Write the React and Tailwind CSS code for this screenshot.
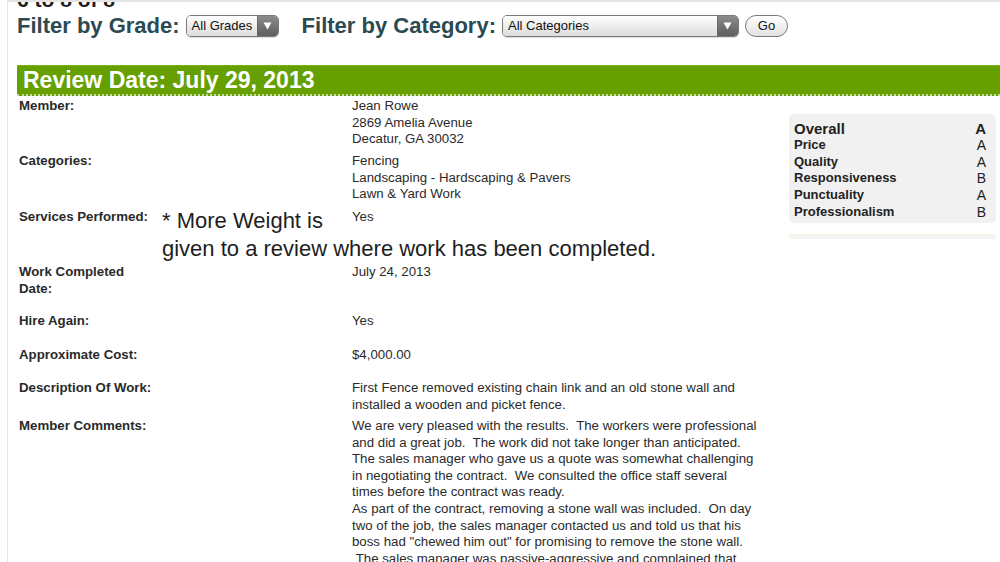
import React from 'react'

const ROWS = [
  { label: ['Member:'], value: ['Jean Rowe', '2869 Amelia Avenue', 'Decatur, GA 30032'], h: 'h-[55px]' },
  { label: ['Categories:'], value: ['Fencing', 'Landscaping - Hardscaping & Pavers', 'Lawn & Yard Work'], h: 'h-[56px]' },
  { label: ['Services Performed:'], value: ['Yes'], h: 'h-[55px]' },
  { label: ['Work Completed', 'Date:'], value: ['July 24, 2013'], h: 'h-[49px]' },
  { label: ['Hire Again:'], value: ['Yes'], h: 'h-[34px]' },
  { label: ['Approximate Cost:'], value: ['$4,000.00'], h: 'h-[33px]' },
  { label: ['Description Of Work:'], value: ['First Fence removed existing chain link and an old stone wall and', 'installed a wooden and picket fence.'], h: 'h-[38px]' },
  {
    label: ['Member Comments:'],
    value: [
      'We are very pleased with the results.  The workers were professional',
      'and did a great job.  The work did not take longer than anticipated.',
      'The sales manager who gave us a quote was somewhat challenging',
      'in negotiating the contract.  We consulted the office staff several',
      'times before the contract was ready.',
      'As part of the contract, removing a stone wall was included.  On day',
      'two of the job, the sales manager contacted us and told us that his',
      'boss had "chewed him out" for promising to remove the stone wall.',
      '\u00a0The sales manager was passive-aggressive and complained that',
    ],
    h: '',
  },
]

const RATINGS = [
  ['Price', 'A'],
  ['Quality', 'A'],
  ['Responsiveness', 'B'],
  ['Punctuality', 'A'],
  ['Professionalism', 'B'],
]

function FakeSelect({ text, width }) {
  return (
    <div className={`${width} h-[22px] flex items-stretch rounded-[5px] border border-[#7a7a7a] overflow-hidden shadow-[0_1px_1px_rgba(0,0,0,0.15)]`}>
      <div className="flex-1 flex items-center pl-[5px] text-[13px] text-[#111] bg-gradient-to-b from-white to-[#dcdcdc]">{text}</div>
      <div className="w-[21px] flex items-center justify-center bg-gradient-to-b from-[#8c8c8c] to-[#5e5e5e] border-l border-[#6a6a6a]">
        <svg width="9" height="8" viewBox="0 0 9 8"><path d="M0.5 0.5h8L4.5 7.5z" fill="#fff" /></svg>
      </div>
    </div>
  )
}

export default function App() {
  return (
    <div className="relative w-[1000px] h-[562px] overflow-hidden bg-white font-['Liberation_Sans',Arial,sans-serif]">
      <div className="absolute left-[7px] top-0 bottom-0 w-px bg-[#e6e6e6]" />
      <div className="absolute left-[8px] right-0 top-0 h-[2px] bg-[#e4e4e4]" />

      <div className="pl-[17px]">
        <div className="-mt-[10px] h-[20px] text-[21px] font-bold leading-[20px] text-[#1e1e1e]">6 to 8 of 8</div>

        <div className="flex items-center h-[26px] mt-[2px] text-[#2b4a51]">
          <span className="text-[22px] font-bold">Filter by Grade:</span>
          <div className="ml-[6px] mt-[2px]"><FakeSelect text="All Grades" width="w-[93px]" /></div>
          <span className="ml-[23px] text-[22px] font-bold">Filter by Category:</span>
          <div className="ml-[6px] mt-[2px]"><FakeSelect text="All Categories" width="w-[237px]" /></div>
          <button className="ml-[6px] mt-[2px] w-[43px] h-[22px] rounded-full border border-[#7a7a7a] bg-gradient-to-b from-white to-[#e2e2e2] text-[13px] text-[#111]">Go</button>
        </div>

        <div className="mt-[27px] h-[31px] bg-[#669f00] border-t border-[#8fc23a] border-b-2 border-b-[#c9dcae] border-dotted flex items-center pl-[6px]">
          <span className="text-[23px] font-bold text-white leading-none">Review Date: July 29, 2013</span>
        </div>

        <div className="flex">
          <div className="w-[770px] pt-[2px] text-[13.25px] leading-[16.6px] text-[#2a2a2a]">
            {ROWS.map((r, i) => (
              <div key={i} className={`flex ${r.h}`}>
                <div className="w-[335px] pl-[2px] font-bold">
                  {r.label.map((l) => <div key={l}>{l}</div>)}
                </div>
                <div className="whitespace-pre">
                  {r.value.map((v) => <div key={v}>{v}</div>)}
                </div>
              </div>
            ))}
          </div>

          <div className="ml-[2px] mt-[18px] w-[207px]">
            <div className="rounded-[5px] bg-[#f1f1f1] px-[5px] pt-[6px] pb-[2px] text-[#222]">
              <div className="flex justify-between text-[15px] font-bold leading-[17px]">
                <span>Overall</span><span className="pr-[5px]">A</span>
              </div>
              {RATINGS.map(([k, g]) => (
                <div key={k} className="flex justify-between text-[13px] leading-[16.7px]">
                  <span className="font-bold">{k}</span><span className="pr-[5px] text-[14px]">{g}</span>
                </div>
              ))}
            </div>
            <div className="mt-[11px] h-[5px] rounded-[3px] bg-[#f3f3f3] border-t border-[#f6f3d8]" />
          </div>
        </div>
      </div>

      <div className="absolute left-[162px] top-[207px] text-[22px] leading-[28px] text-[#1e1e1e]">
        <div>* More Weight is</div>
        <div>given to a review where work has been completed.</div>
      </div>
    </div>
  )
}
